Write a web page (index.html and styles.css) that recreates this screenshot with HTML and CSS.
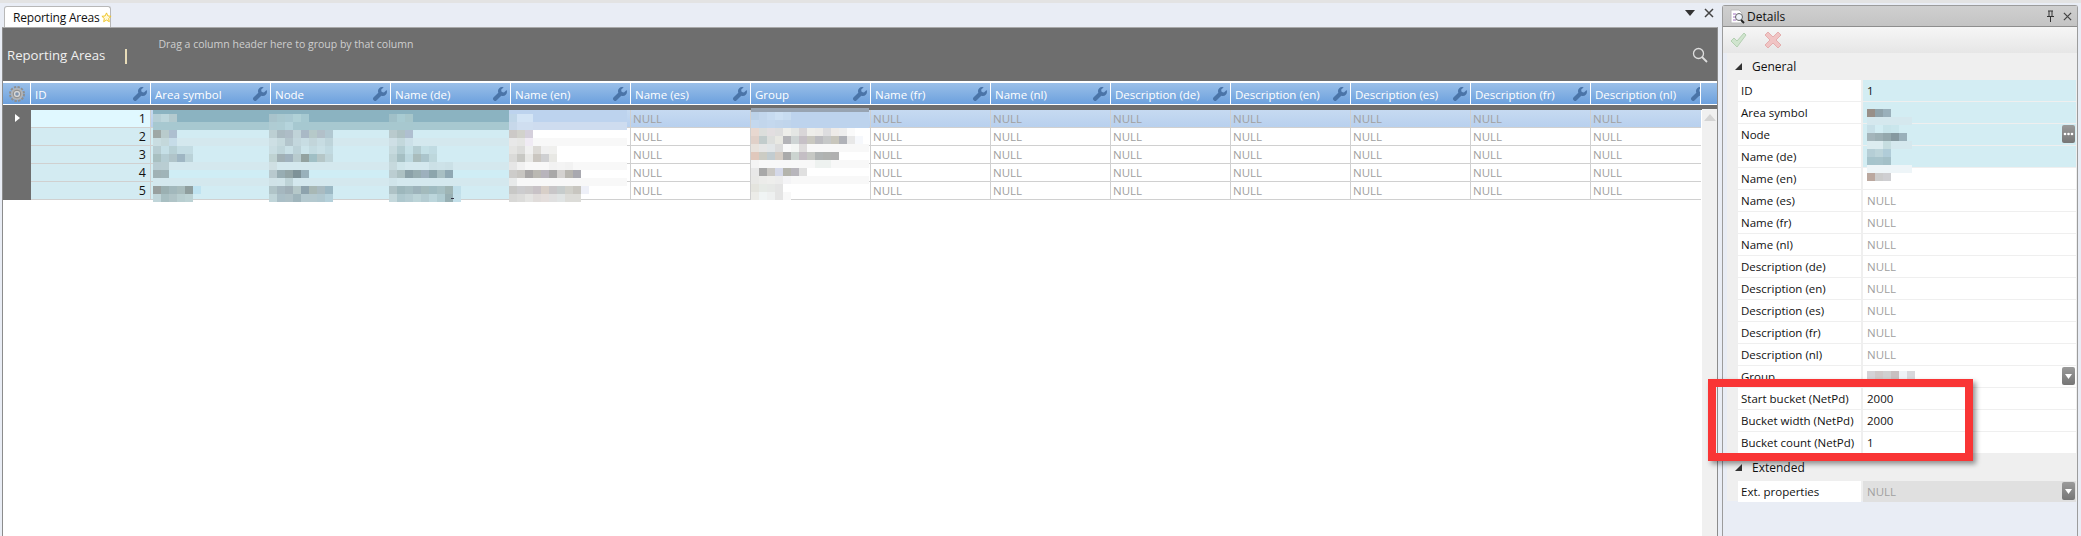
FILE: index.html
```html
<!DOCTYPE html>
<html lang="en">
<head>
    <meta charset="UTF-8">
    <title>Reporting Areas</title>
    <link rel="stylesheet" href="styles.css">
</head>
<body>

    <svg class="defs" width="0" height="0">
        <symbol id="wrench" viewBox="0 0 14 14">
            <path d="M13.6 3.1 11 5.6 8.7 5 8.1 2.8 10.7.3A4.2 4.2 0 0 0 5.3 5.7L.7 10.3a2.1 2.1 0 0 0 3 3l4.6-4.6a4.2 4.2 0 0 0 5.3-5.6z"/>
        </symbol>
        <symbol id="caret" viewBox="0 0 13 18">
            <path d="M3 7h7L6.500 12z"/>
        </symbol>
    </svg>

    <div class="top-strip"></div>

    <div class="workspace">

        <section class="doc">
            <div class="tab-row">
                <div class="tab">
                    Reporting Areas
                    <svg class="star" viewBox="0 0 12 12" width="11" height="11"><path d="M6 1l1.500 3.300 3.500.4-2.600 2.400.7 3.500L6 8.800l-3.100 1.800.7-3.500L1 4.700l3.500-.4z"/></svg>
                </div>
                <div class="tab-tools">
                    <svg viewBox="0 0 10 8" width="10" height="8"><path d="M0 1h10L5 7z" fill="#333"/></svg>
                    <svg viewBox="0 0 10 10" width="10" height="10"><path d="M1 1l8 8M9 1l-8 8" stroke="#444" stroke-width="1.500"/></svg>
                </div>
            </div>

            <div class="panel">
                <div class="group-bar">
                    <span class="view-title">Reporting Areas</span>
                    <span class="view-sep"></span>
                    <span class="group-hint">Drag a column header here to group by that column</span>
                    <svg class="search" viewBox="0 0 16 16" width="16" height="16"><circle cx="6.500" cy="6.500" r="5" fill="none" stroke="#dedede" stroke-width="1.300"/><path d="M10 10l5 5" stroke="#dedede" stroke-width="1.800"/></svg>
                </div>

                <div class="grid-head">
                    <div class="hcell gear-cell">
                        <svg viewBox="0 0 16 16" width="16" height="16">
                            <circle cx="8" cy="8" r="7" fill="none" stroke="#8f8f8f" stroke-width="2" stroke-dasharray="2.400 1.300"/>
                            <circle cx="8" cy="8" r="6" fill="#b4b4b4"/>
                            <circle cx="8" cy="8" r="3.800" fill="#d8d8d8" stroke="#8a8a8a"/>
                            <circle cx="8" cy="8" r="1.800" fill="#7f93ad"/>
                        </svg>
                    </div>
                    <div class="hcell"><span>ID</span><svg class="wrench"><use href="#wrench"/></svg></div>
                    <div class="hcell"><span>Area symbol</span><svg class="wrench"><use href="#wrench"/></svg></div>
                    <div class="hcell"><span>Node</span><svg class="wrench"><use href="#wrench"/></svg></div>
                    <div class="hcell"><span>Name (de)</span><svg class="wrench"><use href="#wrench"/></svg></div>
                    <div class="hcell"><span>Name (en)</span><svg class="wrench"><use href="#wrench"/></svg></div>
                    <div class="hcell"><span>Name (es)</span><svg class="wrench"><use href="#wrench"/></svg></div>
                    <div class="hcell"><span>Group</span><svg class="wrench"><use href="#wrench"/></svg></div>
                    <div class="hcell"><span>Name (fr)</span><svg class="wrench"><use href="#wrench"/></svg></div>
                    <div class="hcell"><span>Name (nl)</span><svg class="wrench"><use href="#wrench"/></svg></div>
                    <div class="hcell"><span>Description (de)</span><svg class="wrench"><use href="#wrench"/></svg></div>
                    <div class="hcell"><span>Description (en)</span><svg class="wrench"><use href="#wrench"/></svg></div>
                    <div class="hcell"><span>Description (es)</span><svg class="wrench"><use href="#wrench"/></svg></div>
                    <div class="hcell"><span>Description (fr)</span><svg class="wrench"><use href="#wrench"/></svg></div>
                    <div class="hcell"><span>Description (nl)</span><svg class="wrench"><use href="#wrench"/></svg></div>
                    <div class="hcell filler"></div>
                </div>

                <div class="grid-body">
                    <div class="rows">
                        <div class="row selected">
                            <div class="sel"><svg viewBox="0 0 5 8" width="5" height="8"><path d="M0 0l5 4-5 4z" fill="#fff"/></svg></div>
                            <div class="cell id current">1</div><div class="cell teal"></div><div class="cell teal"></div><div class="cell teal"></div><div class="cell"></div>
                            <div class="cell null">NULL</div><div class="cell"></div><div class="cell null">NULL</div><div class="cell null">NULL</div><div class="cell null">NULL</div><div class="cell null">NULL</div><div class="cell null">NULL</div><div class="cell null">NULL</div><div class="cell null last">NULL</div>
                        </div>
                        <div class="row">
                            <div class="sel"></div>
                            <div class="cell id">2</div><div class="cell teal"></div><div class="cell teal"></div><div class="cell teal"></div><div class="cell"></div>
                            <div class="cell null">NULL</div><div class="cell"></div><div class="cell null">NULL</div><div class="cell null">NULL</div><div class="cell null">NULL</div><div class="cell null">NULL</div><div class="cell null">NULL</div><div class="cell null">NULL</div><div class="cell null last">NULL</div>
                        </div>
                        <div class="row">
                            <div class="sel"></div>
                            <div class="cell id">3</div><div class="cell teal"></div><div class="cell teal"></div><div class="cell teal"></div><div class="cell"></div>
                            <div class="cell null">NULL</div><div class="cell"></div><div class="cell null">NULL</div><div class="cell null">NULL</div><div class="cell null">NULL</div><div class="cell null">NULL</div><div class="cell null">NULL</div><div class="cell null">NULL</div><div class="cell null last">NULL</div>
                        </div>
                        <div class="row">
                            <div class="sel"></div>
                            <div class="cell id">4</div><div class="cell teal"></div><div class="cell teal"></div><div class="cell teal"></div><div class="cell"></div>
                            <div class="cell null">NULL</div><div class="cell"></div><div class="cell null">NULL</div><div class="cell null">NULL</div><div class="cell null">NULL</div><div class="cell null">NULL</div><div class="cell null">NULL</div><div class="cell null">NULL</div><div class="cell null last">NULL</div>
                        </div>
                        <div class="row">
                            <div class="sel"></div>
                            <div class="cell id">5</div><div class="cell teal"></div><div class="cell teal"></div><div class="cell teal"></div><div class="cell"></div>
                            <div class="cell null">NULL</div><div class="cell"></div><div class="cell null">NULL</div><div class="cell null">NULL</div><div class="cell null">NULL</div><div class="cell null">NULL</div><div class="cell null">NULL</div><div class="cell null">NULL</div><div class="cell null last">NULL</div>
                        </div>
                    </div>
                    <div class="vscroll">
                        <svg viewBox="0 0 12 7" width="12" height="7"><path d="M0 7l6-7 6 7z" fill="#d4d4d4"/></svg>
                    </div>

                    <!-- pixelated values, drawn in page coordinates -->
                    <svg class="mosaic" width="1697" height="100" viewBox="3 105 1697 100" shape-rendering="crispEdges">
                        <path fill="#8bb3c1" d="M153 111H509V123H153z"/>
                        <path fill="#a7c8d0" d="M153 123H509V131H153z"/>
                        <path fill="#d2ecf3" d="M153 131H509V200H153z"/>
                        <path fill="#d4e8ee" d="M153 139H509V147H153zM153 163H509V171H153zM153 179H509V187H153z"/>
                        <path fill="#cfedf5" d="M153 171H509V179H153z"/>

                        <path fill="#bdd3ee" d="M509 111H627V123H509z"/>
                        <path fill="#cedcef" d="M509 123H627V131H509z"/>
                        <path fill="#fff" d="M509 131H627V200H509z"/>
                        <path fill="#f8f8f8" d="M509 139H627V147H509zM509 163H627V171H509zM509 179H627V187H509z"/>

                        <path fill="#98a4b2" d="M751 109H869V113H751z"/>
                        <path fill="#bdd3ed" d="M751 113H869V129H751z"/>
                        <path fill="#fff" d="M751 129H869V200H751z"/>
                        <path fill="#f8f8f8" d="M751 145H869V153H751zM751 161H869V169H751zM751 177H869V185H751z"/>

                        <g class="px" transform="translate(153 115) scale(8)">
                            <rect x="0" y="0" fill="#b6cfd6"/><rect x="1" y="0" fill="#bdd6dc"/><rect x="2" y="0" fill="#b3cacf"/>
                            <rect x="0" y="2" fill="#9ea8a6"/><rect x="1" y="2" fill="#b9cbcc"/><rect x="2" y="2" fill="#adbfd0"/>
                            <rect x="0" y="3" fill="#c9dde1"/><rect x="1" y="3" fill="#c4d8db"/><rect x="2" y="3" fill="#c6dce8"/>
                            <rect x="0" y="4" fill="#b7cdd2"/><rect x="1" y="4" fill="#c5dfe6"/><rect x="2" y="4" fill="#b7d0d5"/><rect x="3" y="4" fill="#c3dce3"/><rect x="4" y="4" fill="#c3dce3"/>
                            <rect x="0" y="5" fill="#a8bfc0"/><rect x="1" y="5" fill="#b5cdd3"/><rect x="2" y="5" fill="#b0c4c9"/><rect x="3" y="5" fill="#9fb6c3"/><rect x="4" y="5" fill="#bad2d8"/>
                            <rect x="0" y="6" fill="#b8ccd2"/><rect x="1" y="6" fill="#b9cdd2"/>
                            <rect x="0" y="7" fill="#a0b2b5"/><rect x="1" y="7" fill="#a0b4b8"/>
                            <rect x="0" y="9" fill="#98a09f"/><rect x="1" y="9" fill="#9bb0b2"/><rect x="2" y="9" fill="#a2b8bc"/><rect x="3" y="9" fill="#a8bcbd"/><rect x="4" y="9" fill="#8f9e9e"/><rect x="5" y="9" fill="#bfe3f1"/>
                            <rect x="0" y="10" fill="#c0d5d9"/><rect x="1" y="10" fill="#a8bfc2"/><rect x="2" y="10" fill="#b0c4c7"/><rect x="3" y="10" fill="#b8ced0"/><rect x="4" y="10" fill="#bcd2d4"/>
                        </g>

                        <g class="px" transform="translate(269 115) scale(8)">
                            <rect x="0" y="0" fill="#a8c3cb"/><rect x="1" y="0" fill="#a9c8cf"/><rect x="2" y="0" fill="#a9c9d2"/><rect x="3" y="0" fill="#b0d1d7"/><rect x="4" y="0" fill="#a6c9d1"/>
                            <rect x="0" y="1" fill="#afccd3"/><rect x="1" y="1" fill="#aecdd4"/><rect x="2" y="1" fill="#b5d4dc"/><rect x="3" y="1" fill="#a6c8d0"/><rect x="4" y="1" fill="#a6c8d0"/>
                            <rect x="0" y="2" fill="#bccfd3"/><rect x="1" y="2" fill="#aabbc2"/><rect x="2" y="2" fill="#aebdc7"/><rect x="3" y="2" fill="#c0d3d8"/><rect x="4" y="2" fill="#a9b9c6"/><rect x="5" y="2" fill="#b6c9c9"/><rect x="6" y="2" fill="#b2c0c9"/><rect x="7" y="2" fill="#b1c8d1"/>
                            <rect x="0" y="3" fill="#cddfe4"/><rect x="1" y="3" fill="#c5d9dd"/><rect x="2" y="3" fill="#b3c5cc"/><rect x="3" y="3" fill="#c3d7dd"/><rect x="4" y="3" fill="#c8dde3"/><rect x="5" y="3" fill="#c2d5da"/><rect x="6" y="3" fill="#c7dce2"/><rect x="7" y="3" fill="#bed4da"/>
                            <rect x="0" y="4" fill="#c9dde2"/><rect x="1" y="4" fill="#bfd5da"/><rect x="2" y="4" fill="#c9e0e6"/><rect x="3" y="4" fill="#bcd2d8"/><rect x="4" y="4" fill="#cce4ea"/><rect x="5" y="4" fill="#c3dbe1"/><rect x="6" y="4" fill="#c9e0e6"/><rect x="7" y="4" fill="#c1dae1"/>
                            <rect x="0" y="5" fill="#bfd2d2"/><rect x="1" y="5" fill="#a1b0b5"/><rect x="2" y="5" fill="#a0b2be"/><rect x="3" y="5" fill="#b8cbce"/><rect x="4" y="5" fill="#93a2a0"/><rect x="5" y="5" fill="#a0bfc5"/><rect x="6" y="5" fill="#b5c6c7"/><rect x="7" y="5" fill="#bfd5da"/>
                            <rect x="0" y="6" fill="#cfdfe3"/>
                            <rect x="0" y="7" fill="#b8c9ce"/><rect x="1" y="7" fill="#98adb3"/><rect x="2" y="7" fill="#93a5a7"/><rect x="3" y="7" fill="#7e9298"/><rect x="4" y="7" fill="#99b1bb"/>
                            <rect x="0" y="8" fill="#d0e2e7"/><rect x="1" y="8" fill="#d0e3e8"/><rect x="2" y="8" fill="#bed3d7"/>
                            <rect x="0" y="9" fill="#b0c4c8"/><rect x="1" y="9" fill="#a5b7bf"/><rect x="2" y="9" fill="#a0b0b8"/><rect x="3" y="9" fill="#b5c8c9"/><rect x="4" y="9" fill="#8ea3ad"/><rect x="5" y="9" fill="#a8b8b5"/><rect x="6" y="9" fill="#a9bbc1"/><rect x="7" y="9" fill="#9bb8c4"/>
                            <rect x="0" y="10" fill="#c0d5d9"/><rect x="1" y="10" fill="#aabfc7"/><rect x="2" y="10" fill="#adc0c6"/><rect x="3" y="10" fill="#9fb5bc"/><rect x="4" y="10" fill="#b4c9cf"/><rect x="5" y="10" fill="#b4c9cf"/><rect x="6" y="10" fill="#b0c8d0"/><rect x="7" y="10" fill="#b4d0da"/>
                        </g>

                        <g class="px" transform="translate(389 115) scale(8)">
                            <rect x="0" y="0" fill="#a0c0c8"/><rect x="1" y="0" fill="#a8cbd2"/><rect x="2" y="0" fill="#a6c6cb"/>
                            <rect x="0" y="1" fill="#a7c8cf"/><rect x="1" y="1" fill="#a7c8cf"/><rect x="2" y="1" fill="#a7c8cf"/>
                            <rect x="0" y="2" fill="#b9cacd"/><rect x="1" y="2" fill="#aec2c4"/><rect x="2" y="2" fill="#afbfd0"/>
                            <rect x="0" y="3" fill="#cedfe5"/><rect x="1" y="3" fill="#c3d8dc"/><rect x="2" y="3" fill="#cce0e8"/>
                            <rect x="0" y="4" fill="#c6dade"/><rect x="1" y="4" fill="#b3cdd2"/><rect x="2" y="4" fill="#c5e0e6"/><rect x="3" y="4" fill="#b4cdd2"/><rect x="4" y="4" fill="#c4e0e6"/><rect x="5" y="4" fill="#c0dbe2"/>
                            <rect x="0" y="5" fill="#bed3d6"/><rect x="1" y="5" fill="#a5bfc3"/><rect x="2" y="5" fill="#bdd8df"/><rect x="3" y="5" fill="#a9bcbc"/><rect x="4" y="5" fill="#abc5cc"/><rect x="5" y="5" fill="#bdd7dc"/>
                            <rect x="0" y="6" fill="#c6d9dd"/><rect x="1" y="6" fill="#cfe5ea"/><rect x="5" y="6" fill="#cbe0e6"/><rect x="6" y="6" fill="#cde2e8"/><rect x="7" y="6" fill="#cbe0e6"/>
                            <rect x="0" y="7" fill="#bbcdd1"/><rect x="1" y="7" fill="#adc1c3"/><rect x="2" y="7" fill="#8ba1a8"/><rect x="3" y="7" fill="#97adb1"/><rect x="4" y="7" fill="#9db0bd"/><rect x="5" y="7" fill="#8ca5ac"/><rect x="6" y="7" fill="#a8bfc3"/><rect x="7" y="7" fill="#8fa8b3"/>
                            <rect x="0" y="8" fill="#d0e4ea"/>
                            <rect x="0" y="9" fill="#aec2c6"/><rect x="1" y="9" fill="#9db7bc"/><rect x="2" y="9" fill="#a3bcc1"/><rect x="3" y="9" fill="#9db3bb"/><rect x="4" y="9" fill="#a3babc"/><rect x="5" y="9" fill="#9fbbc1"/><rect x="6" y="9" fill="#a6c0c4"/><rect x="7" y="9" fill="#9fb5b5"/><rect x="8" y="9" fill="#c0dfea"/>
                            <rect x="0" y="10" fill="#c4d8dc"/><rect x="1" y="10" fill="#aec8ce"/><rect x="2" y="10" fill="#b4ccd2"/><rect x="3" y="10" fill="#bcd4d8"/><rect x="4" y="10" fill="#b4ccd2"/><rect x="5" y="10" fill="#bcd6dc"/><rect x="6" y="10" fill="#b0ccd2"/><rect x="7" y="10" fill="#98b0b4"/><rect x="8" y="10" fill="#c4e0ea"/>
                        </g>
                        <path fill="#334" d="M451 199h3v1h-3zM572 199h3v1h-3z"/>

                        <g class="px" transform="translate(509 115) scale(8)">
                            <rect x="0" y="0" fill="#c0d6e8"/><rect x="1" y="0" fill="#d3e4f5"/><rect x="2" y="0" fill="#d3e4f5"/>
                            <rect x="0" y="1" fill="#c7d8ea"/><rect x="1" y="1" fill="#cfdef0"/><rect x="2" y="1" fill="#cfdef0"/>
                            <rect x="0" y="2" fill="#ccc9c7"/><rect x="1" y="2" fill="#d2d2cc"/><rect x="2" y="2" fill="#d5d0dc"/>
                            <rect x="0" y="3" fill="#e8e8e8"/><rect x="1" y="3" fill="#e6e6e4"/><rect x="2" y="3" fill="#f0ebf4"/>
                            <rect x="0" y="4" fill="#e4e4e2"/><rect x="1" y="4" fill="#dcdcda"/><rect x="2" y="4" fill="#f0f0f0"/><rect x="3" y="4" fill="#dcdad6"/><rect x="4" y="4" fill="#f0f0f0"/><rect x="5" y="4" fill="#f0f0ee"/>
                            <rect x="0" y="5" fill="#dadad8"/><rect x="1" y="5" fill="#c8c8c4"/><rect x="2" y="5" fill="#e8e8e6"/><rect x="3" y="5" fill="#cac6c0"/><rect x="4" y="5" fill="#cfd0d2"/><rect x="5" y="5" fill="#e8e8e4"/>
                            <rect x="0" y="6" fill="#e6e6e6"/><rect x="1" y="6" fill="#f1f1f1"/><rect x="5" y="6" fill="#f2f2f2"/><rect x="6" y="6" fill="#f4f4f4"/><rect x="7" y="6" fill="#f2f2f2"/>
                            <rect x="0" y="7" fill="#cdccca"/><rect x="1" y="7" fill="#c8c6c2"/><rect x="2" y="7" fill="#a8a6a6"/><rect x="3" y="7" fill="#bab8b2"/><rect x="4" y="7" fill="#b8b4bc"/><rect x="5" y="7" fill="#a9a8a8"/><rect x="6" y="7" fill="#d4d2d0"/><rect x="7" y="7" fill="#b8b6b0"/><rect x="8" y="7" fill="#a9a9b0"/>
                            <rect x="0" y="8" fill="#e8eaea"/>
                            <rect x="0" y="9" fill="#c8c8c6"/><rect x="1" y="9" fill="#ccccce"/><rect x="2" y="9" fill="#cccaca"/><rect x="3" y="9" fill="#c8c2c6"/><rect x="4" y="9" fill="#d8cfc8"/><rect x="5" y="9" fill="#c8c6c8"/><rect x="6" y="9" fill="#c6cccc"/><rect x="7" y="9" fill="#d0d0ca"/><rect x="8" y="9" fill="#c8c6c0"/><rect x="9" y="9" fill="#eef0f8"/>
                            <rect x="0" y="10" fill="#d8d8d6"/><rect x="1" y="10" fill="#dcdcda"/><rect x="2" y="10" fill="#e4e4e2"/><rect x="3" y="10" fill="#e0dcda"/><rect x="4" y="10" fill="#e4dedc"/><rect x="5" y="10" fill="#e0e0e0"/><rect x="6" y="10" fill="#e0e4e4"/><rect x="7" y="10" fill="#dcdcd8"/><rect x="8" y="10" fill="#dcdcd8"/>
                        </g>

                        <g class="px" transform="translate(751 113) scale(8)">
                            <rect x="0" y="0" fill="#bcd2e8"/><rect x="1" y="0" fill="#c2d6ec"/><rect x="2" y="0" fill="#c7dbf0"/><rect x="3" y="0" fill="#cde0f3"/><rect x="4" y="0" fill="#c8dcf0"/>
                            <rect x="0" y="1" fill="#c4d8ee"/><rect x="1" y="1" fill="#c2d6ec"/><rect x="2" y="1" fill="#c4d8ee"/><rect x="3" y="1" fill="#c2d6ec"/><rect x="4" y="1" fill="#c0d5ec"/>
                            <rect x="0" y="2" fill="#e8d8d0"/><rect x="1" y="2" fill="#dcdedc"/><rect x="2" y="2" fill="#e2dee0"/><rect x="3" y="2" fill="#dedede"/><rect x="4" y="2" fill="#eeeeea"/><rect x="5" y="2" fill="#e4e6e4"/><rect x="6" y="2" fill="#d9d6d8"/><rect x="7" y="2" fill="#eeeeea"/><rect x="8" y="2" fill="#ecebe8"/><rect x="9" y="2" fill="#dddddf"/><rect x="10" y="2" fill="#eeebe8"/><rect x="11" y="2" fill="#eeeeee"/><rect x="12" y="2" fill="#fafafa"/>
                            <rect x="0" y="3" fill="#e0d0c8"/><rect x="1" y="3" fill="#c2cccc"/><rect x="2" y="3" fill="#dcdedc"/><rect x="3" y="3" fill="#e8e8e2"/><rect x="4" y="3" fill="#b4b4b8"/><rect x="5" y="3" fill="#ced4d4"/><rect x="6" y="3" fill="#c6c0c6"/><rect x="7" y="3" fill="#c9c8c0"/><rect x="8" y="3" fill="#bcbcc0"/><rect x="9" y="3" fill="#c6c8c8"/><rect x="10" y="3" fill="#c8c6bc"/><rect x="11" y="3" fill="#b0b2b8"/><rect x="12" y="3" fill="#e8e8e8"/><rect x="13" y="3" fill="#f6f8fc"/>
                            <rect x="0" y="4" fill="#e8e2dc"/><rect x="1" y="4" fill="#e6e6e6"/><rect x="2" y="4" fill="#e2e6e8"/><rect x="3" y="4" fill="#dcdcdc"/><rect x="4" y="4" fill="#fafafa"/><rect x="5" y="4" fill="#f4f6f4"/><rect x="6" y="4" fill="#dedcdc"/>
                            <rect x="0" y="5" fill="#e0c8bc"/><rect x="1" y="5" fill="#ccccc4"/><rect x="2" y="5" fill="#c2ccd0"/><rect x="3" y="5" fill="#d4ccc4"/><rect x="4" y="5" fill="#aaaaaa"/><rect x="5" y="5" fill="#ccd4d0"/><rect x="6" y="5" fill="#c4bec4"/><rect x="7" y="5" fill="#c6c8c4"/><rect x="8" y="5" fill="#b0b4b4"/><rect x="9" y="5" fill="#b0b2b0"/><rect x="10" y="5" fill="#b0b0b0"/>
                            <rect x="0" y="6" fill="#f4f4f4"/><rect x="8" y="6" fill="#eef2f0"/><rect x="9" y="6" fill="#eef2f0"/>
                            <rect x="0" y="7" fill="#e8e8e8"/><rect x="1" y="7" fill="#a8a8a8"/><rect x="2" y="7" fill="#cac8c4"/><rect x="3" y="7" fill="#d4d8e8"/><rect x="4" y="7" fill="#b4b4ac"/><rect x="5" y="7" fill="#b8b6bc"/><rect x="6" y="7" fill="#e0e0e0"/>
                            <rect x="0" y="8" fill="#e8e8e6"/><rect x="1" y="8" fill="#ececea"/><rect x="2" y="8" fill="#eeeeec"/><rect x="3" y="8" fill="#ececec"/><rect x="4" y="8" fill="#f4f4f6"/>
                            <rect x="0" y="9" fill="#e4e4de"/><rect x="1" y="9" fill="#e6eae6"/><rect x="2" y="9" fill="#e6e8e6"/><rect x="3" y="9" fill="#e4e4e4"/>
                            <rect x="0" y="10" fill="#ecece8"/><rect x="1" y="10" fill="#f0f4f4"/><rect x="2" y="10" fill="#eef0f0"/><rect x="3" y="10" fill="#e4e4e4"/><rect x="4" y="10" fill="#f8f8f8"/>
                        </g>
                    </svg>
                </div>
            </div>
        </section>

        <aside class="details">
            <div class="details-title">
                <svg viewBox="0 0 15 15" width="15" height="15">
                    <path d="M1 1h8l3 3v10H1z" fill="#fff" stroke="#bbb"/>
                    <path d="M3 5h3M3 8h3M3 11h3" stroke="#a070c0"/>
                    <circle cx="9" cy="8" r="3.500" fill="#eef4fa" stroke="#666"/>
                    <path d="M11 11l3 3" stroke="#222" stroke-width="2"/>
                </svg>
                <span>Details</span>
                <svg class="pin" viewBox="0 0 9 12" width="9" height="12"><path d="M2 1h5M3 1v5M6 1v5M1 6.500h7M4.500 7v5" stroke="#333" fill="none"/></svg>
                <svg viewBox="0 0 10 10" width="9" height="9"><path d="M1 1l8 8M9 1l-8 8" stroke="#444" stroke-width="1.400"/></svg>
            </div>
            <div class="details-tools">
                <svg viewBox="0 0 17 16" width="17" height="16"><path d="M1 9l3-3 3 3 7-8 2 2-9 12z" fill="#d0e4ce" stroke="#b4d0b2"/></svg>
                <svg viewBox="0 0 16 16" width="16" height="16"><path d="M3 0l5 5 5-5 3 3-5 5 5 5-3 3-5-5-5 5-3-3 5-5-5-5z" fill="#f0c4c4" stroke="#e4aeae"/></svg>
            </div>
            <div class="props">
                <div class="section">
                    <svg viewBox="0 0 7 7" width="7" height="7"><path d="M7 0v7H0z" fill="#333"/></svg>
                    General
                </div>
                <div class="prop-list">
                    <div class="prop"><div class="prop-name">ID</div><div class="prop-value teal">1</div></div>
                    <div class="prop"><div class="prop-name">Area symbol</div><div class="prop-value teal"></div></div>
                    <div class="prop"><div class="prop-name">Node</div><div class="prop-value teal"><button class="more"><svg viewBox="0 0 13 18"><circle cx="3" cy="9" r="1.300"/><circle cx="6.500" cy="9" r="1.300"/><circle cx="10" cy="9" r="1.300"/></svg></button></div></div>
                    <div class="prop"><div class="prop-name">Name (de)</div><div class="prop-value teal"></div></div>
                    <div class="prop"><div class="prop-name">Name (en)</div><div class="prop-value"></div></div>
                    <div class="prop"><div class="prop-name">Name (es)</div><div class="prop-value null">NULL</div></div>
                    <div class="prop"><div class="prop-name">Name (fr)</div><div class="prop-value null">NULL</div></div>
                    <div class="prop"><div class="prop-name">Name (nl)</div><div class="prop-value null">NULL</div></div>
                    <div class="prop"><div class="prop-name">Description (de)</div><div class="prop-value null">NULL</div></div>
                    <div class="prop"><div class="prop-name">Description (en)</div><div class="prop-value null">NULL</div></div>
                    <div class="prop"><div class="prop-name">Description (es)</div><div class="prop-value null">NULL</div></div>
                    <div class="prop"><div class="prop-name">Description (fr)</div><div class="prop-value null">NULL</div></div>
                    <div class="prop"><div class="prop-name">Description (nl)</div><div class="prop-value null">NULL</div></div>
                    <div class="prop">
                        <div class="prop-name">Group</div>
                        <div class="prop-value">
                            <span class="blur-group"><i></i><i></i><i></i><i></i><i></i><i></i></span>
                            <button class="drop"><svg><use href="#caret"/></svg></button>
                        </div>
                    </div>
                    <div class="prop"><div class="prop-name">Start bucket (NetPd)</div><div class="prop-value">2000</div></div>
                    <div class="prop"><div class="prop-name">Bucket width (NetPd)</div><div class="prop-value">2000</div></div>
                    <div class="prop"><div class="prop-name">Bucket count (NetPd)</div><div class="prop-value">1</div></div>
                </div>
                <div class="section second">
                    <svg viewBox="0 0 7 7" width="7" height="7"><path d="M7 0v7H0z" fill="#333"/></svg>
                    Extended
                </div>
                <div class="prop-list">
                    <div class="prop">
                        <div class="prop-name">Ext. properties</div>
                        <div class="prop-value null off">NULL<button class="drop"><svg><use href="#caret"/></svg></button></div>
                    </div>
                </div>
            </div>

            <svg class="mosaic-details" width="60" height="72" viewBox="1867 108 60 72" shape-rendering="crispEdges">
                <path fill="#d5e8ee" d="M1867 116h45v8h-45zM1867 140h45v8h-45z"/>
                <path fill="#eef5f8" d="M1867 164h45v8h-45z"/>
                <g class="px" transform="translate(1867 108) scale(8)">
                    <rect x="0" y="0" fill="#988f88"/><rect x="1" y="0" fill="#90a3ab"/><rect x="2" y="0" fill="#9ab0bb"/>
                    <rect x="0" y="2" fill="#c8e0e8"/><rect x="1" y="2" fill="#d3edf3"/><rect x="2" y="2" fill="#c8e4ea"/><rect x="3" y="2" fill="#cae6ec"/>
                    <rect x="0" y="3" fill="#a4b5bb"/><rect x="1" y="3" fill="#9db0b5"/><rect x="2" y="3" fill="#94a8ad"/><rect x="3" y="3" fill="#8699a0"/><rect x="4" y="3" fill="#9ab0ba"/>
                    <rect x="0" y="4" fill="#dcecf0"/><rect x="1" y="4" fill="#dcecf0"/><rect x="2" y="4" fill="#c6dde0"/>
                    <rect x="0" y="5" fill="#b5ced6"/><rect x="1" y="5" fill="#bcd4da"/><rect x="2" y="5" fill="#b0ccd8"/>
                    <rect x="0" y="6" fill="#a6c4cc"/><rect x="1" y="6" fill="#a8c4cc"/><rect x="2" y="6" fill="#a4c0c8"/>
                    <rect x="0" y="8" fill="#bba89f"/><rect x="1" y="8" fill="#cccccc"/><rect x="2" y="8" fill="#cfcfd2"/>
                </g>
            </svg>
        </aside>
    </div>

    <!-- annotation drawn over the screenshot -->
    <div class="red-box"></div>

</body>
</html>
```

FILE: styles.css
```css
html, body {
    height: 100%;
}

body {
    margin: 0;
    overflow: hidden;
    position: relative;
    background-color: #e9edf5;
    font-family: 'Open Sans', sans-serif;
    font-size: 11.5px;
    color: #111;
}

.defs {
    position: absolute;
}

.top-strip {
    height: 3px;
    background-color: #e3e3e3;
}

.workspace {
    display: flex;
    height: 533px;
    padding-left: 2px;
    gap: 4px;
}

/* left document */
.doc {
    width: 1716px;
    display: flex;
    flex-direction: column;
}

.tab-row {
    height: 24px;
    display: flex;
    align-items: flex-end;
    flex-shrink: 0;
    padding-left: 2px;
}

.tab {
    height: 21px;
    width: 107px;
    box-sizing: border-box;
    padding-left: 8px;
    display: flex;
    align-items: center;
    gap: 1px;
    background-color: #fff;
    border: 1px solid #b8b8b8;
    border-bottom: none;
    border-radius: 3px 3px 0 0;
    font-size: 12px;
    white-space: nowrap;
    letter-spacing: -0.2px;
}

.star {
    fill: #fff8d8;
    stroke: #eec21e;
    stroke-width: 1;
    flex-shrink: 0;
}

.tab-tools {
    margin-left: auto;
    display: flex;
    align-items: center;
    gap: 9px;
    height: 24px;
    padding-right: 4px;
    padding-bottom: 4px;
    box-sizing: border-box;
}

.panel {
    flex: 1;
    display: flex;
    flex-direction: column;
    border-top: 1px solid #a9a9a9;
    border-left: 1px solid #8c8c8c;
    border-right: 1px solid #8c8c8c;
    background-color: #fff;
}

.group-bar {
    height: 53px;
    position: relative;
    flex-shrink: 0;
    display: flex;
    background-color: #6e6e6e;
    color: #f0f0f0;
    border-bottom: 2px solid #fff;
}

.view-title {
    font-size: 13.200px;
    margin: 18px 0 0 4px;
    white-space: nowrap;
}

.view-sep {
    width: 2px;
    height: 15px;
    margin: 21px 0 0 20px;
    background-color: #e8dcb8;
}

.group-hint {
    margin: 9px 0 0 31px;
    font-size: 10.500px;
    color: #cfcfcf;
    white-space: nowrap;
}

.search {
    position: absolute;
    right: 9px;
    top: 19px;
}

.grid-head {
    display: grid;
    grid-template-columns: 28px repeat(13, 120px) 110px 16px;
    height: 22px;
    flex-shrink: 0;
    background: linear-gradient(#9abfe8, #6a9fdd);
}

.hcell {
    display: flex;
    align-items: center;
    justify-content: space-between;
    box-sizing: border-box;
    padding: 0 3px 0 4px;
    border-right: 1px solid #fff;
    color: #fff;
    white-space: nowrap;
    overflow: hidden;
}

.hcell.filler {
    border-right: none;
}

.gear-cell {
    justify-content: center;
    padding: 0;
}

.wrench {
    width: 14px;
    height: 14px;
    flex-shrink: 0;
    fill: #4a74a8;
}

.hcell:nth-child(15) .wrench {
    margin-right: -8px;
}

.grid-body {
    flex: 1;
    position: relative;
    display: flex;
    padding-top: 6px;
    margin-top: -1px;
    background:
        linear-gradient(#6e6e6e, #6e6e6e) top / 100% 6px no-repeat,
        #fff;
    box-shadow: inset 0 1px 0 #fff;
}

.rows {
    width: 1698px;
}

.row {
    display: grid;
    grid-template-columns: 28px repeat(13, 120px) 110px;
    height: 18px;
}

.sel {
    background-color: #6e6e6e;
    display: flex;
    align-items: center;
    justify-content: center;
    padding-bottom: 2px;
    box-sizing: border-box;
}

.cell {
    box-sizing: border-box;
    height: 18px;
    line-height: 17px;
    padding: 0 2px;
    border-right: 1px solid #d0d0d0;
    border-bottom: 1px solid #d0d0d0;
    white-space: nowrap;
    overflow: hidden;
}

.cell.last {
    border-right: none;
}

.cell.id {
    text-align: right;
    padding-right: 4px;
    background-color: #d3ebf2;
    font-size: 12.500px;
}

.cell.teal {
    background-color: #d2edf3;
}

.null {
    color: #a0a0a0;
}

.row.selected .cell {
    background: linear-gradient(#c6daf1, #b8d0ee);
}

.row.selected .cell.id {
    background: #e0f8ff;
}

.vscroll {
    width: 15px;
    margin-left: 1px;
    margin-top: -1px;
    background-color: #f0f0f0;
    padding-top: 5px;
    box-sizing: border-box;
}

.vscroll svg {
    display: block;
    margin: 0 auto;
}

.mosaic {
    position: absolute;
    left: 0;
    top: 0;
}

.px rect {
    width: 1px;
    height: 1px;
}

/* right details panel */
.details {
    position: relative;
    width: 356px;
    margin-top: 2px;
    height: 531px;
    box-sizing: border-box;
    border: 1px solid #9c9c9c;
    border-bottom: none;
    border-radius: 3px 3px 0 0;
    display: flex;
    flex-direction: column;
}

.details-title {
    height: 21px;
    flex-shrink: 0;
    display: flex;
    align-items: center;
    gap: 2px;
    padding: 0 5px 0 7px;
    box-sizing: border-box;
    background: linear-gradient(#cfcfcf, #c4c4c4);
    border-bottom: 1px solid #8e8e8e;
    font-size: 12px;
}

.details-title span {
    flex: 1;
}

.pin {
    margin-right: 6px;
}

.details-tools {
    height: 26px;
    flex-shrink: 0;
    display: flex;
    align-items: center;
    gap: 18px;
    padding-left: 7px;
    box-sizing: border-box;
    background: linear-gradient(#f6f6f6, #e6e6e6);
}

.props {
    margin-left: 4px;
    background-color: #efefef;
    padding-right: 1px;
}

.section {
    height: 27px;
    display: flex;
    align-items: center;
    gap: 10px;
    padding-left: 8px;
    font-size: 12px;
}

.section.second {
    padding-top: 2px;
}

.prop-list {
    display: flex;
    flex-direction: column;
    gap: 2px;
    padding-left: 11px;
}

.prop {
    display: grid;
    grid-template-columns: 123px 1fr;
    gap: 2px;
    height: 20px;
    line-height: 21px;
}

.prop-name {
    background-color: #fff;
    padding-left: 3px;
    white-space: nowrap;
}

.prop-value {
    position: relative;
    background-color: #fff;
    padding-left: 4px;
}

.prop-value.teal {
    background-color: #d3edf3;
}

.prop-value.off {
    background-color: #e0e0e0;
}

.more, .drop {
    position: absolute;
    right: 1px;
    top: 1px;
    width: 13px;
    height: 18px;
    padding: 0;
    border: none;
    border-radius: 2px;
    background: linear-gradient(#9a9a9a, #767676);
}

.more svg, .drop svg {
    display: block;
    width: 13px;
    height: 18px;
    fill: #fff;
}

.blur-group {
    display: flex;
    padding-top: 5px;
}

.blur-group i {
    width: 8px;
    height: 8px;
    background-color: #d4d2d6;
}

.blur-group i:nth-child(2) { background-color: #cfc8c8; }
.blur-group i:nth-child(3) { background-color: #d0d0d0; }
.blur-group i:nth-child(4) { background-color: #c8c0c0; }
.blur-group i:nth-child(5) { background-color: #eef2f6; }
.blur-group i:nth-child(6) { background-color: #d8d8dc; }

.mosaic-details {
    position: absolute;
    left: 144px;
    top: 103px;
}

.red-box {
    position: absolute;
    left: 1708px;
    top: 379px;
    width: 265px;
    height: 82px;
    box-sizing: border-box;
    border: 8px solid #f93535;
    box-shadow: 3px 3px 5px rgba(0, 0, 0, 0.4);
}
```
